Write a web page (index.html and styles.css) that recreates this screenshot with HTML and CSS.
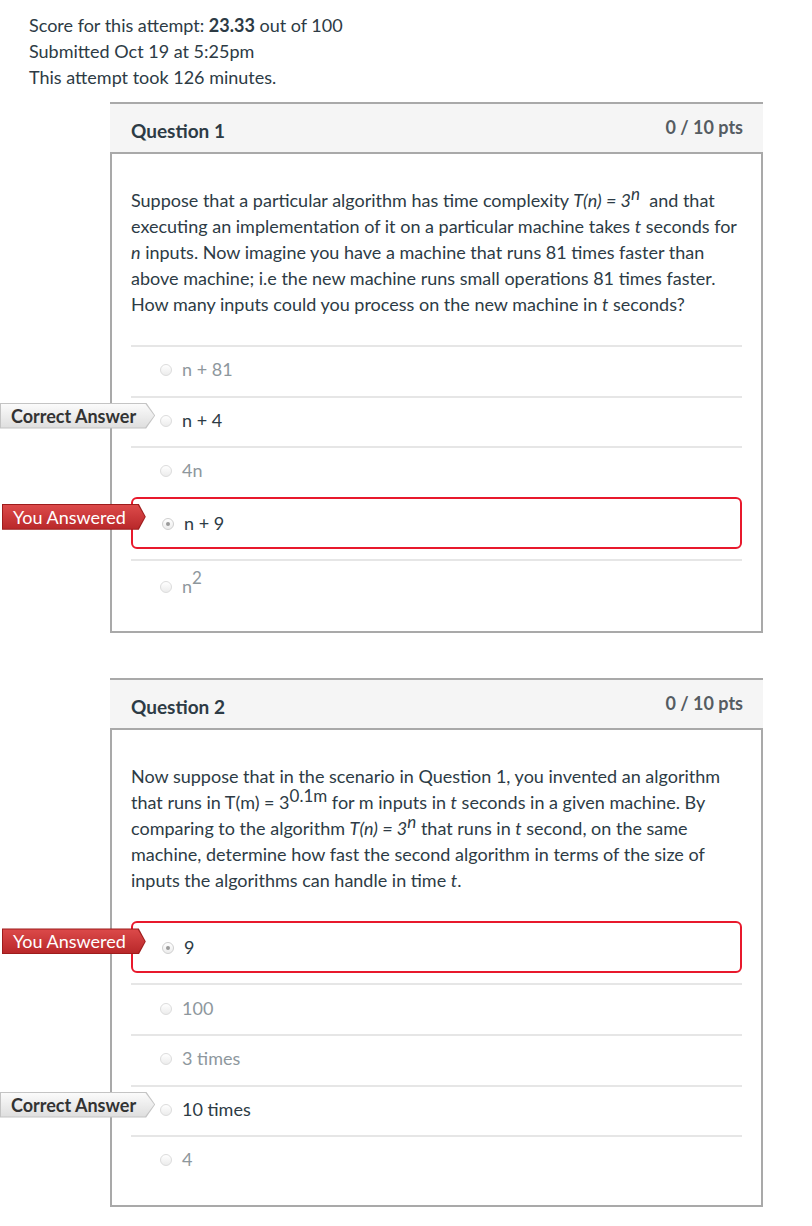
FILE: index.html
```html
<!DOCTYPE html>
<html lang="en">
<head>
<meta charset="utf-8">
<title>Quiz results</title>
<link rel="stylesheet" href="styles.css">
</head>
<body>
<div class="page">
  <div class="summary">
    <div>Score for this attempt: <b>23.33</b> out of 100</div>
    <div>Submitted Oct 19 at 5:25pm</div>
    <div>This attempt took 126 minutes.</div>
  </div>

  <div class="question">
    <div class="q-header"><span class="q-title">Question 1</span><span class="q-pts">0 / 10 pts</span></div>
    <div class="q-body">
      <div class="q-text">Suppose that a particular algorithm has time complexity <i>T(n) = 3<sup>n</sup></i>&nbsp; and that<br>executing an implementation of it on a particular machine takes <i>t</i> seconds for<br><i>n</i> inputs. Now imagine you have a machine that runs 81 times faster than<br>above machine; i.e the new machine runs small operations 81 times faster.<br>How many inputs could you process on the new machine in <i>t</i> seconds?</div>
      <div class="answers">
        <div class="answer"><span class="radio"></span><span class="label">n + 81</span></div>
        <div class="answer is-key"><span class="badge badge-correct"><span class="badge-in">Correct Answer</span></span><span class="radio"></span><span class="label">n + 4</span></div>
        <div class="answer"><span class="radio"></span><span class="label">4n</span></div>
        <div class="answer is-picked"><span class="badge badge-wrong"><span class="badge-in">You Answered</span></span><span class="radio radio-on"></span><span class="label">n + 9</span></div>
        <div class="answer has-sup"><span class="radio"></span><span class="label">n<sup>2</sup></span></div>
      </div>
    </div>
  </div>

  <div class="question">
    <div class="q-header"><span class="q-title">Question 2</span><span class="q-pts">0 / 10 pts</span></div>
    <div class="q-body">
      <div class="q-text">Now suppose that in the scenario in Question 1, you invented an algorithm<br>that runs in T(m) = 3<sup>0.1m</sup> for m inputs in <i>t</i> seconds in a given machine. By<br>comparing to the algorithm <i>T(n) = 3<sup>n</sup></i> that runs in <i>t</i> second, on the same<br>machine, determine how fast the second algorithm in terms of the size of<br>inputs the algorithms can handle in time <i>t</i>.</div>
      <div class="answers">
        <div class="answer is-picked"><span class="badge badge-wrong"><span class="badge-in">You Answered</span></span><span class="radio radio-on"></span><span class="label">9</span></div>
        <div class="answer"><span class="radio"></span><span class="label">100</span></div>
        <div class="answer"><span class="radio"></span><span class="label">3 times</span></div>
        <div class="answer is-key"><span class="badge badge-correct"><span class="badge-in">Correct Answer</span></span><span class="radio"></span><span class="label">10 times</span></div>
        <div class="answer"><span class="radio"></span><span class="label">4</span></div>
      </div>
    </div>
  </div>
</div>
</body>
</html>
```

FILE: styles.css
```css
html, body {
  margin: 0;
  padding: 0;
  background: #ffffff;
}

body {
  font-family: Lato, "Open Sans", "Liberation Sans", sans-serif;
  font-size: 18px;
  color: #2d3b45;
}

.page {
  padding-top: 12px;
  padding-bottom: 20px;
}

.summary {
  margin-left: 29px;
  line-height: 26px;
  font-size: 18px;
}

.summary b {
  font-weight: 700;
}

.question {
  margin: 12px 0 45px 110px;
  width: 653px;
}

.question + .question {
  margin-top: 0;
}

.q-header {
  display: flex;
  justify-content: space-between;
  align-items: center;
  height: 48px;
  padding: 0 20px 0 21px;
  background: #f5f5f5;
  border-top: 2px solid #a9a9a9;
  border-bottom: 2px solid #a9a9a9;
}

.q-title {
  font-size: 19px;
  font-weight: 700;
  color: #2d3b45;
  padding-top: 5px;
}

.q-pts {
  font-size: 18px;
  font-weight: 700;
  color: #555c62;
  padding-bottom: 2px;
}

.q-body {
  border: 2px solid #a9a9a9;
  border-top: none;
  padding: 33px 19px 19px 19px;
}

.q-text {
  line-height: 26px;
  font-size: 18px;
  white-space: nowrap;
}

.q-text sup {
  font-size: 17px;
  line-height: 0;
  vertical-align: 7px;
}

.answers {
  margin-top: 28px;
}

.answer {
  position: relative;
  display: flex;
  align-items: center;
  gap: 10px;
  box-sizing: border-box;
  height: 50.6px;
  padding: 0 0 4px 29px;
  border-top: 2px solid #e6e6e6;
  color: #8e979d;
  font-size: 18px;
}

.answer.has-sup {
  height: 53.6px;
  padding-top: 3px;
}

.answer.is-key {
  color: #2d3b45;
}

.answer.is-picked {
  color: #2d3b45;
  border: 2px solid #e8192c;
  border-radius: 6px;
  height: 52px;
  padding-bottom: 0;
  margin-bottom: 10px;
}

.answer sup {
  font-size: 17px;
  line-height: 0;
  vertical-align: 9px;
}

.label {
  line-height: 22px;
}

.radio {
  width: 10px;
  height: 10px;
  border-radius: 50%;
  border: 1px solid #dcdcdc;
  background: linear-gradient(#ffffff, #ececec);
  flex: none;
  margin-top: 2px;
  box-sizing: content-box;
  position: relative;
}

.radio-on {
  border-color: #cfcfcf;
}

.radio-on::after {
  content: "";
  position: absolute;
  left: 3px;
  top: 3px;
  width: 4px;
  height: 4px;
  border-radius: 50%;
  background: #9a9a9a;
}

.badge {
  position: absolute;
  top: 5px;
  display: block;
  padding: 1px;
}

.badge-in {
  display: block;
  height: 24px;
  line-height: 24px;
  font-size: 18px;
  font-weight: 700;
  white-space: nowrap;
}

.badge-correct {
  left: -131px;
  background: #c4c4c4;
  clip-path: polygon(0 0, calc(100% - 9px) 0, 100% 50%, calc(100% - 9px) 100%, 0 100%);
}

.badge-correct .badge-in {
  padding: 0 18px 0 10px;
  color: #333333;
  background: linear-gradient(#fbfbfb, #dedede);
  clip-path: polygon(0 0, calc(100% - 9px) 0, 100% 50%, calc(100% - 9px) 100%, 0 100%);
}

.badge-wrong {
  left: -131px;
  background: #9e1c1c;
  clip-path: polygon(0 0, calc(100% - 7px) 0, 100% 50%, calc(100% - 7px) 100%, 0 100%);
}

.badge-wrong .badge-in {
  padding: 0 19px 0 10px;
  color: #ffffff;
  font-weight: 400;
  background: linear-gradient(#dc4a4a, #b9282a);
  clip-path: polygon(0 0, calc(100% - 7px) 0, 100% 50%, calc(100% - 7px) 100%, 0 100%);
}
```
